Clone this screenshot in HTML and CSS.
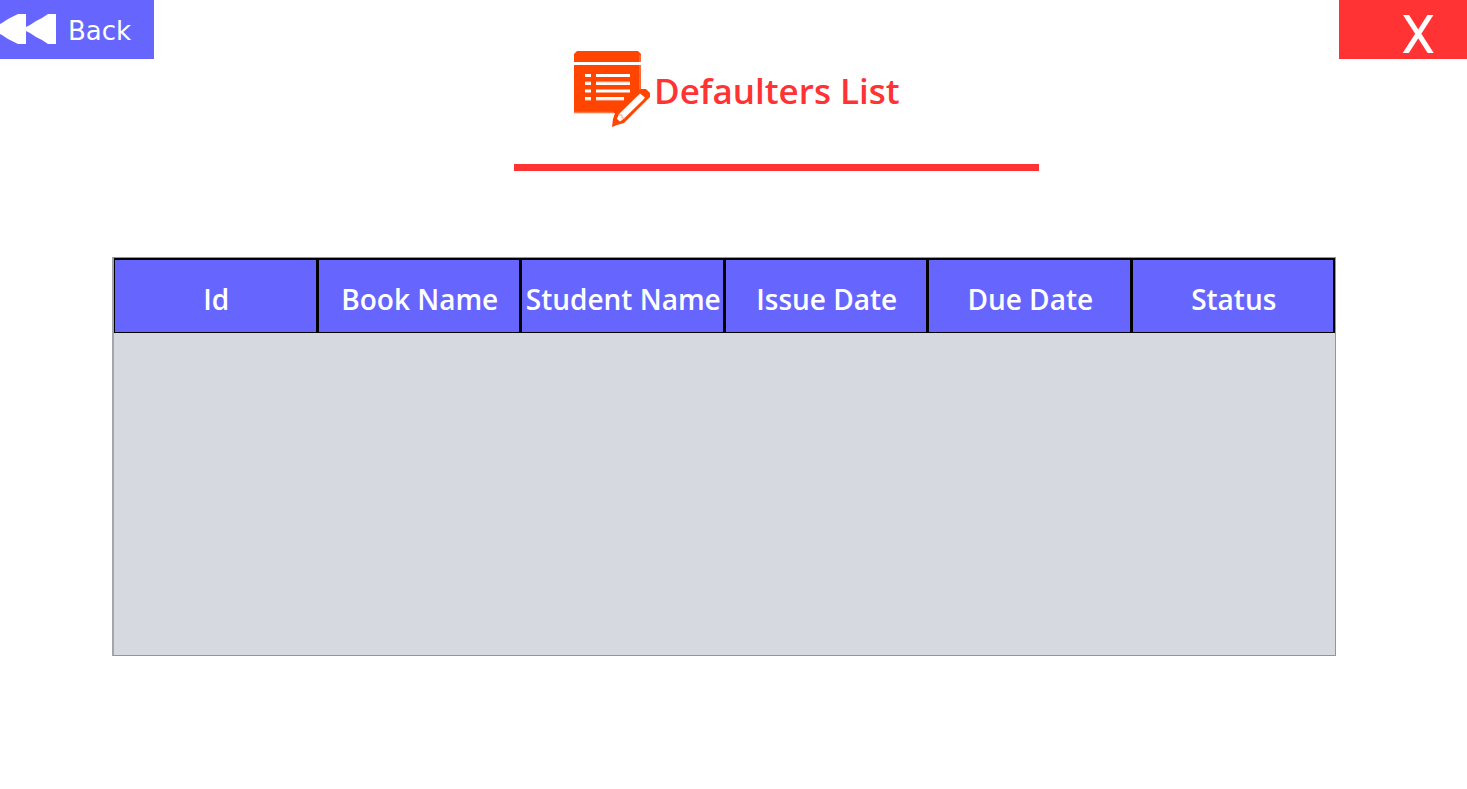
FILE: index.html
```
<!DOCTYPE html>
<html lang="en">
<head>
<meta charset="utf-8">
<meta name="viewport" content="width=device-width, initial-scale=1">
<title>Defaulters List</title>
<link rel="stylesheet" href="styles.css">
</head>
<body>
<div class="page">
  <nav class="topbar">
    <button class="back" type="button">
      <svg class="back-icon" viewBox="0 0 56 30" aria-hidden="true">
        <path d="M26 0H18L14 2L8 5L2 9L0 10V20L2 21L8 25L14 28L18 30H26V17L30 19L36 23L42 26L48 30H56V0H48L42 4L36 7L30 11L26 13Z" fill="#fff"/>
      </svg>
      <span class="back-label">Back</span>
    </button>
    <button class="close" type="button" aria-label="Close">X</button>
  </nav>
  <header class="heading">
    <div class="title-row">
      <svg class="title-icon" viewBox="0 0 76 76" aria-hidden="true">
        <path d="M0 11V3L3 0H64L67 3V11Z" fill="#ff4500"/>
        <path d="M0 14H67V40L42 62H0Z" fill="#ff4500"/>
        <path d="M66 4V11M66 14V39M0 61.500H40" stroke="#ff7a4a" stroke-width="1.500"/>
        <path d="M11 24.500H17M22 24.500H56M11 32.500H17M22 32.500H56M11 40H17M22 40H56M11 47.500H17M22 47.500H50" stroke="#fff" stroke-width="3"/>
        <path d="M11 31H17M22 31H56M11 49H17M22 49H50" stroke="#ffc4ae" stroke-width="1"/>
        <path d="M38 76L39 68L41 62L63 40L67 38H72L76 42V46L70 52L50 72L43 74Z" fill="#ff4500"/>
        <path d="M66 42.500L71 46.500L69 49L50 67.500L46 70.500L43 68L45 63Z" fill="#fff"/>
        <path d="M44 64H48V67H51" fill="none" stroke="#ffa27f" stroke-width="1"/>
      </svg>
      <h1 class="title">Defaulters List</h1>
    </div>
    <hr class="rule">
  </header>
  <main class="list">
    <table class="grid">
      <thead>
        <tr>
          <th scope="col">Id</th>
          <th scope="col">Book Name</th>
          <th scope="col">Student Name</th>
          <th scope="col">Issue Date</th>
          <th scope="col">Due Date</th>
          <th scope="col">Status</th>
        </tr>
      </thead>
      <tbody></tbody>
    </table>
  </main>
</div>
</body>
</html>
```
FILE: styles.css
```
* {
  box-sizing: border-box;
}

body {
  margin: 0;
  background: #fff;
  font-family: "Noto Sans", "Open Sans", sans-serif;
}

.page {
  min-height: 100vh;
}

.topbar {
  display: flex;
  justify-content: space-between;
  align-items: flex-start;
}

.back,
.close {
  height: 59px;
  border: 0;
  color: #fff;
  cursor: pointer;
}

.back {
  display: flex;
  align-items: flex-start;
  gap: 12px;
  width: 154px;
  padding: 14px 0 0;
  background: #6666ff;
  font-family: "DejaVu Sans", sans-serif;
  font-size: 26px;
  line-height: 34px;
}

.back-icon {
  width: 56px;
  height: 30px;
}

.close {
  width: 128px;
  padding: 10px 32px 0 0;
  background: #ff3333;
  font-family: Roboto, sans-serif;
  font-size: 54px;
  line-height: 48px;
  text-align: right;
}

.heading {
  display: flex;
  flex-direction: column;
  align-items: center;
  margin-top: -8px;
  padding-left: 86px;
}

.title-row {
  display: flex;
  align-items: center;
  gap: 4px;
  width: 405px;
}

.title-icon {
  flex: none;
  width: 76px;
  height: 76px;
}

.title {
  margin: 0;
  padding-top: 4px;
  color: #ff3333;
  font-family: "Open Sans", "Noto Sans", sans-serif;
  font-size: 35px;
  font-weight: 600;
  line-height: 48px;
  white-space: nowrap;
}

.rule {
  width: 525px;
  max-width: 100%;
  height: 7px;
  margin: 37px 0 0;
  border: 0;
  background: #ff3333;
}

.list {
  margin: 86px 131px 0 112px;
  min-height: 399px;
  border: 1px solid #92959e;
  border-left: 2px solid #a2a5ae;
  background: #d6d9e0;
}

.grid {
  width: 100%;
  table-layout: fixed;
  border-collapse: separate;
  border-spacing: 0;
}

.grid th {
  height: 75px;
  padding: 6px 0 0 2px;
  border: solid #000;
  border-width: 2px 2px 1px 1px;
  background: #6666ff;
  color: #fff;
  font-family: "Open Sans", "Noto Sans", sans-serif;
  font-size: 28px;
  font-weight: 600;
  line-height: 40px;
  white-space: nowrap;
}
```
